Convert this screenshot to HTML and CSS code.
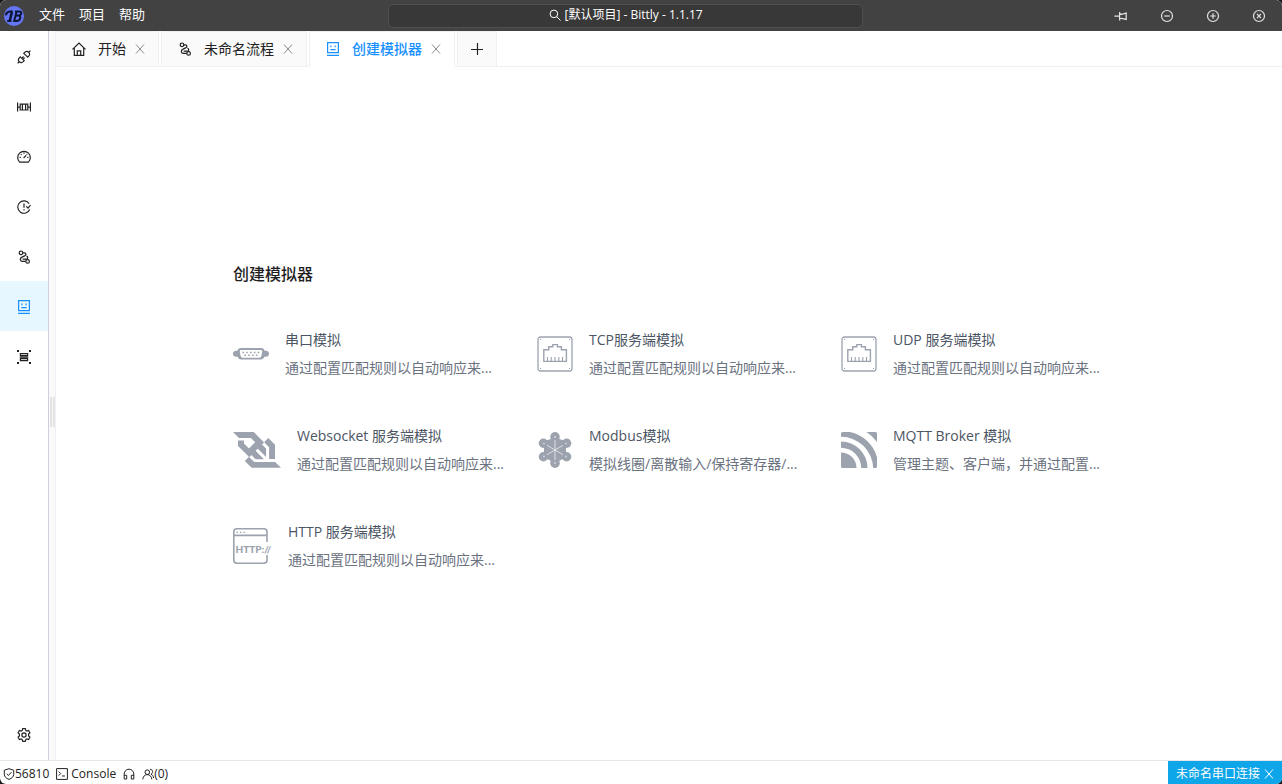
FILE: index.html
```html
<!DOCTYPE html>
<html lang="zh-CN">
<head>
<meta charset="utf-8">
<title>[默认项目] - Bittly - 1.1.17</title>
<link rel="stylesheet" href="styles.css">
</head>
<body>
<svg class="defs" aria-hidden="true">
  <symbol id="close" viewBox="0 0 12 12"><path d="M2 1.5l8 9M10 1.5l-8 9"/></symbol>
  <symbol id="flow" viewBox="0 0 14 14"><circle cx="4" cy="2.800" r="1.800"/><circle cx="10.600" cy="11.400" r="1.800"/><path d="M5.800 2.800h1.400c2.200 0 2.200 2.400.4 3.100L5 7.100c-2.400 1-2.200 4.300.6 4.300h3.200M5.600 9.200h3.400c2 0 2.400-2.600.4-3.200"/></symbol>
  <symbol id="robot" viewBox="0 0 14 14"><path d="M1.600.6h10.800v10H1.600zM1 13.300h12M4.900 3.600v1.600M9.100 3.600v1.600M4.400 7.700h5.200"/></symbol>
  <symbol id="ethernet" viewBox="0 0 36 36"><rect x="1" y="1" width="34" height="34" rx="2.500" stroke-width="1.300"/><path stroke-width="1.400" d="M6.800 25.400V13.800h5v-3h4V8.600h4.600v2.200h4v3h5v11.600z"/><path stroke-width="1.100" d="M10.500 25v-4M14.200 25v-4M18 25v-4M21.800 25v-4M25.500 25v-4"/><path stroke-width="1" d="M3 4l1-1M32 3l1 1M3 32l1 1M33 32l-1 1"/></symbol>
</svg>
<div class="window">
  <header class="titlebar">
    <nav class="menu">
      <svg class="logo" viewBox="0 0 22 22" aria-hidden="true"><circle cx="11" cy="11" r="10" fill="#6576f5"/><path fill="none" stroke="#0d1638" stroke-width="2.600" d="M9 6.500L6.800 15.800"/><path fill="none" stroke="#0d1638" stroke-width="2" d="M3.200 10.400c-.6-3 2.800-4.200 6.300-4.200M4.200 15.900h4.200M13.600 6.400l-2.400 9.400M12 6.400h4.200c3.200 0 2.600 4-.8 4.200h-2.200M15 10.600c3.800 0 2.800 5.300-1.600 5.300h-3.200"/></svg>
      <button type="button">文件</button>
      <button type="button">项目</button>
      <button type="button">帮助</button>
    </nav>
    <button type="button" class="search">
      <svg class="i12" viewBox="0 0 12 12" aria-hidden="true"><circle cx="4.900" cy="4.900" r="3.800"/><path d="M7.700 7.700l3.800 3.800"/></svg>
      <span>[默认项目] - Bittly - 1.1.17</span>
    </button>
    <div class="controls">
      <button type="button" aria-label="置顶"><svg class="i14" viewBox="0 0 14 14"><path d="M.4 7.200h5.200M5.600 3v8.400M5.600 4.600l2 .7 4.600-1.200v6.300L7.600 9.300l-2 .7"/></svg></button>
      <button type="button" aria-label="最小化"><svg class="i14" viewBox="0 0 14 14"><circle cx="7" cy="7" r="5.500"/><path d="M4.200 7h5.600"/></svg></button>
      <button type="button" aria-label="最大化"><svg class="i14" viewBox="0 0 14 14"><circle cx="7" cy="7" r="5.500"/><path d="M4.200 7h5.600M7 4.200v5.600"/></svg></button>
      <button type="button" aria-label="关闭"><svg class="i14" viewBox="0 0 14 14"><circle cx="7" cy="7" r="5.500"/><path d="M5 4.800l4 4.400M9 4.800l-4 4.400"/></svg></button>
    </div>
  </header>

  <div class="workspace">
    <aside class="sidebar">
      <button type="button" aria-label="连接"><svg class="i14" viewBox="0 0 14 14"><path d="M.6 13.400l1.700-1.700M11.700 2.300L13.400.6M3.300 6.800l3.900 3.900-1.300 1.200c-2.500 2-5.800-1.100-3.800-3.800zM6.800 3.300l3.900 3.900 1.200-1.300c2-2.500-1.100-5.800-3.800-3.800zM4.900 8.200L6.600 6.500M6 9.300l1.700-1.700"/></svg></button>
      <button type="button" aria-label="总线"><svg class="i14" viewBox="0 0 14 14"><path d="M.6 2.600v9M13.400 2.600v9M3.200 4.200h7.600V10H3.200zM5.400 4.200V10M8.600 4.200V10M.6 7.100h2.600M10.800 7.100h2.600"/></svg></button>
      <button type="button" aria-label="仪表盘"><svg class="i14" viewBox="0 0 14 14"><path d="M2.600 12.100a6.300 6.300 0 1 1 8.800 0zM6.600 8l2.600-2.600M7 2.600v1.200M3.800 4.100l.8.800M10.200 4.100l-.6.600M2.600 7.400h1.200M10.200 7.400h1.200"/></svg></button>
      <button type="button" aria-label="定时任务"><svg class="i14" viewBox="0 0 14 14"><path d="M12.200 3.700a6.200 6.200 0 1 0 .5 5.700M7 3.600v4.200M7 9.300v1.200M9.300 6.400l1.700 1.700 2.600-3"/></svg></button>
      <button type="button" aria-label="流程"><svg class="i14"><use href="#flow"/></svg></button>
      <button type="button" class="active" aria-label="模拟器"><svg class="i14"><use href="#robot"/></svg></button>
      <button type="button" aria-label="数据"><svg class="i14" viewBox="0 0 14 14"><path d="M3.400 3.600h7.200v2H3.400zM3.400 8.600h7.200v2H3.400zM2.800 7.100h8.400"/><path stroke-width="2" d="M0 1.100h2M12 1.100h2M0 12.900h2M12 12.900h2"/></svg></button>
      <button type="button" class="settings" aria-label="设置"><svg class="i14" viewBox="0 0 14 14"><circle cx="7" cy="7" r="2.100"/><path d="M5.700.7h2.600l.5 1.700 1 .6 1.800-.5 1.300 2.300-1.300 1.300v1.800l1.300 1.300-1.300 2.300-1.800-.5-1 .6-.5 1.700H5.700l-.5-1.700-1-.6-1.800.5L1.100 9.200l1.300-1.300V6.100L1.100 4.800l1.300-2.300 1.800.5 1-.6z"/></svg></button>
    </aside>
    <div class="splitter"><span class="grip"></span></div>
    <main class="main">
      <nav class="tabs">
        <div class="tab">
          <svg class="i14" viewBox="0 0 14 14" aria-hidden="true"><path d="M.5 7.400L7 1l6.500 6.400M2.300 6v7.300h9.400V6M5.300 13V8.800h3.400V13"/></svg>
          <button type="button" class="label">开始</button>
          <button type="button" class="x" aria-label="关闭"><svg class="i12"><use href="#close"/></svg></button>
        </div>
        <div class="tab">
          <svg class="i14" aria-hidden="true"><use href="#flow"/></svg>
          <button type="button" class="label">未命名流程</button>
          <button type="button" class="x" aria-label="关闭"><svg class="i12"><use href="#close"/></svg></button>
        </div>
        <div class="tab current">
          <svg class="i14" aria-hidden="true"><use href="#robot"/></svg>
          <button type="button" class="label">创建模拟器</button>
          <button type="button" class="x" aria-label="关闭"><svg class="i12"><use href="#close"/></svg></button>
        </div>
        <button type="button" class="add" aria-label="新建"><svg class="i14" viewBox="0 0 14 14"><path d="M1 7.500h12M7.500 1v12"/></svg></button>
      </nav>
      <section class="content">
        <div class="panel">
          <h1>创建模拟器</h1>
          <div class="cards">
            <a href="#serial" class="card">
              <svg class="pic" viewBox="0 0 36 36" aria-hidden="true"><path fill="#9ca3af" stroke="none" fill-rule="evenodd" d="M8 12h20q3 0 3.600 2.800h1.400q3 .4 3 3t-3 3h-1.600Q30.400 23.600 28 23.600H8q-2.400 0-3.400-2.800H3q-3-.4-3-3t3-3h1.400Q5 12 8 12zm.4 2q-2 0-1.600 2l.8 4q.4 1.800 2 1.800h16.800q1.600 0 2-1.800l.8-4q.4-2-1.600-2z"/><path stroke-width="1.500" stroke-dasharray="1.600 2.200" d="M9.400 16.500h18M11.400 19.300h14"/></svg>
              <div class="text"><strong>串口模拟</strong><p>通过配置匹配规则以自动响应来...</p></div>
            </a>
            <a href="#tcp" class="card">
              <svg class="pic" aria-hidden="true"><use href="#ethernet"/></svg>
              <div class="text"><strong>TCP服务端模拟</strong><p>通过配置匹配规则以自动响应来...</p></div>
            </a>
            <a href="#udp" class="card">
              <svg class="pic" aria-hidden="true"><use href="#ethernet"/></svg>
              <div class="text"><strong>UDP 服务端模拟</strong><p>通过配置匹配规则以自动响应来...</p></div>
            </a>
            <a href="#websocket" class="card">
              <svg class="pic wide solid" viewBox="0 0 256 192" aria-hidden="true"><path d="M192.440 144.645h31.780V68.339l-35.805-35.804-22.472 22.472 26.497 26.497zM224.304 160.576H113.452L86.954 134.080l11.237-11.236 21.885 21.885h45.028l-44.357-44.441 11.320-11.320 44.357 44.358V88.296l-21.801-21.801 11.152-11.153L110.685 0H0l31.696 31.696v.168H95.590l22.472 22.472-33.037 33.037L58.530 60.877V45.951H26.665v28.090l58.361 58.361-22.137 22.304 36.810 36.474H256z"/></svg>
              <div class="text"><strong>Websocket 服务端模拟</strong><p>通过配置匹配规则以自动响应来...</p></div>
            </a>
            <a href="#modbus" class="card">
              <svg class="pic solid" viewBox="0 0 36 36" aria-hidden="true"><path d="M18 3.500Q21 8 29 8.500 26 17 31 25.500 23 27 18 32.500 13 27 5 25.500 10 17 7 8.500 15 8 18 3.500z"/><path d="M18 6l11 6v12l-11 6-11-6V12z"/><circle cx="18" cy="4.800" r="4.800"/><circle cx="29.600" cy="11.200" r="4.700"/><circle cx="29.600" cy="24.800" r="4.700"/><circle cx="18" cy="31.200" r="4.800"/><circle cx="6.400" cy="24.800" r="4.700"/><circle cx="6.400" cy="11.200" r="4.700"/><path stroke="#eceef1" stroke-width=".8" d="M18 8v20M10 13.300l16 9.400M26 13.300l-16 9.400"/><g fill="#d5d8de"><circle cx="18" cy="5" r=".9"/><circle cx="29" cy="11.600" r=".9"/><circle cx="29" cy="24.400" r=".9"/><circle cx="18" cy="31" r=".9"/><circle cx="7" cy="24.400" r=".9"/><circle cx="7" cy="11.600" r=".9"/></g></svg>
              <div class="text"><strong>Modbus模拟</strong><p>模拟线圈/离散输入/保持寄存器/...</p></div>
            </a>
            <a href="#mqtt" class="card">
              <svg class="pic solid" viewBox="0 0 36 36" aria-hidden="true"><path d="M0 20.500A15.500 15.500 0 0 1 15.500 36H1.500Q0 36 0 34.500zM0 9.500A26.500 26.500 0 0 1 26.500 36h-6.300A20.200 20.200 0 0 0 0 15.800zM0 1.500Q0 0 1.500 0H9A36 36 0 0 1 36 25v9.500q0 1.500-1.500 1.500h-2.300A32.200 32.200 0 0 0 0 4.800zM25.500 0h9Q36 0 36 1.500V10A38 38 0 0 0 25.500 0z"/></svg>
              <div class="text"><strong>MQTT Broker 模拟</strong><p>管理主题、客户端，并通过配置...</p></div>
            </a>
            <a href="#http" class="card">
              <svg class="pic http" viewBox="0 0 39 36" aria-hidden="true"><path d="M34 14V4q0-3.200-3.200-3.200H4Q.8.800.8 4v28q0 3.200 3.200 3.200h26.800Q34 35.200 34 32v-5M1 7.400h33"/><path stroke-width="1.200" d="M3.500 4.300h1.500M7 4.300h1.500M10.500 4.300h1.500"/><text x="2.400" y="24.600">HTTP://</text></svg>
              <div class="text"><strong>HTTP 服务端模拟</strong><p>通过配置匹配规则以自动响应来...</p></div>
            </a>
          </div>
        </div>
      </section>
    </main>
  </div>

  <footer class="status">
    <button type="button" class="port"><svg class="i12" viewBox="0 0 12 12" aria-hidden="true"><path d="M6 .7l4.700 1.500v4.200c0 2.300-2 4-4.700 5-2.700-1-4.700-2.700-4.700-5V2.200zM3.700 5.800l1.700 1.700 3-3.300"/></svg>56810</button>
    <button type="button"><svg class="i12" viewBox="0 0 12 12" aria-hidden="true"><path d="M.6.6h10.800v10.800H.6zM2.700 3.600l2 2-2 2M5.900 8h3"/></svg>Console</button>
    <button type="button" aria-label="客服"><svg class="i12" viewBox="0 0 12 12"><path d="M1.200 11V6a4.800 4.800 0 0 1 9.600 0v5H8.300V7.300h2.500M1.200 7.300h2.500V11H1.200"/></svg></button>
    <button type="button" class="people"><svg class="i12" viewBox="0 0 12 12" aria-hidden="true"><circle cx="5.300" cy="4.200" r="2.300"/><path d="M.8 11.300c.3-3 2-4.700 4.500-4.700s4.200 1.700 4.500 4.700M8 1.200c3.200.2 3.300 4.300 1 4.900 1.500.7 2.400 2 2.600 4"/></svg>(0)</button>
    <button type="button" class="connection">未命名串口连接<svg class="i12" aria-hidden="true"><use href="#close"/></svg></button>
  </footer>
</div>
</body>
</html>
```
FILE: styles.css
```css
* { box-sizing: border-box; }

body {
  margin: 0;
  background: #16161c;
  font: 14px/22px "Open Sans", "Noto Sans CJK SC", sans-serif;
  color: #222;
}

button {
  border: 0;
  padding: 0;
  background: none;
  font: inherit;
  color: inherit;
}

svg {
  flex: none;
  fill: none;
  stroke: currentColor;
}

.defs { display: none; }

.i14 {
  width: 14px;
  height: 14px;
  stroke-width: 1.2;
}

.i12 {
  width: 12px;
  height: 12px;
}

.window {
  display: flex;
  flex-direction: column;
  height: 100vh;
  border-radius: 6px;
  overflow: hidden;
  background: #fff;
}

.titlebar {
  display: grid;
  grid-template-columns: 30.3% 37% 1fr;
  align-items: center;
  height: 31px;
  flex: none;
  background: #424242;
  color: #fff;
  font-size: 13px;
  line-height: 20px;
}

.menu {
  display: flex;
  align-items: center;
  gap: 14px;
  padding-left: 3px;
}

.menu button { padding-bottom: 4px; }

.logo {
  width: 22px;
  height: 22px;
  stroke: none;
}

.search {
  display: flex;
  align-items: center;
  justify-content: center;
  gap: 4px;
  height: 24px;
  padding-bottom: 2px;
  border: 1px solid #505050;
  border-radius: 5px;
  background: #383838;
  font-size: 12px;
}

.controls {
  display: flex;
  justify-content: flex-end;
  color: #e4e4e4;
}

.controls button {
  display: grid;
  place-items: center;
  width: 46px;
  height: 31px;
}

.workspace {
  display: flex;
  flex: 1;
  min-height: 0;
}

.sidebar {
  display: flex;
  flex-direction: column;
  width: 49px;
  border-right: 1px solid #cdd1de;
}

.sidebar button {
  display: grid;
  place-items: center;
  height: 50px;
  padding-top: 2px;
}

.sidebar .active {
  background: #e6f7ff;
  color: #1890ff;
}

.sidebar .settings {
  margin-top: auto;
  padding-top: 0;
}

.splitter {
  display: flex;
  align-items: center;
  width: 6px;
  padding-top: 32px;
  background: #fafafa;
}

.grip {
  flex: 1;
  height: 30px;
  margin-left: 1px;
  border: solid #e4e4e4;
  border-width: 0 2px;
  background: #f6f6f6;
}

.main {
  display: flex;
  flex-direction: column;
  flex: 1;
  min-width: 0;
  border-left: 1px solid #f0f0f0;
}

.tabs {
  display: flex;
  gap: 2px;
  height: 36px;
  flex: none;
  box-shadow: inset 0 -1px #f0f0f0;
}

.tab,
.add {
  display: flex;
  align-items: center;
  border: 1px solid #f0f0f0;
  background: #fafafa;
}

.tab { padding: 0 12px 0 16px; }
.tab:first-child { border-left: 0; }
.label { margin: 0 8px 0 12px; }

.x {
  display: grid;
  color: #8c8c8c;
}

.current {
  border-bottom-color: #fff;
  background: #fff;
  color: #1890ff;
}

.current .label { font-weight: 500; }

.add {
  justify-content: center;
  width: 40px;
}

.content {
  display: grid;
  place-items: center;
  flex: 1;
  padding-top: 8px;
}

h1 {
  margin: 0 0 40px;
  font-size: 16px;
  line-height: 24px;
  font-weight: 500;
  color: #1f1f1f;
}

.cards {
  display: grid;
  grid-template-columns: repeat(3, 264px);
  gap: 40px;
}

.card {
  display: flex;
  align-items: center;
  gap: 16px;
  text-decoration: none;
  line-height: 28px;
  color: #4b5563;
}

.pic {
  width: 36px;
  height: 36px;
  color: #9ca3af;
}

.wide { width: 48px; }

.http {
  width: 39px;
  stroke-width: 1.6;
}

.http text {
  fill: currentColor;
  stroke: none;
  font: 900 10px Lato, sans-serif;
}

.solid {
  fill: currentColor;
  stroke: none;
}

.text { white-space: nowrap; }

.text strong {
  display: block;
  font-weight: 400;
}

.text p {
  margin: 0;
  color: #6b7280;
}

.status {
  display: flex;
  gap: 7px;
  height: 24px;
  flex: none;
  padding-left: 3px;
  border-top: 1px solid #e5e7eb;
  font-size: 12px;
  line-height: 20px;
}

.status button {
  display: flex;
  align-items: center;
  gap: 3px;
  padding-top: 2px;
}

.status .port,
.status .people { gap: 0; }

.status .connection {
  margin-left: auto;
  padding: 2px 7px 0 8px;
  background: #0ea5e9;
  color: #fff;
}
```
